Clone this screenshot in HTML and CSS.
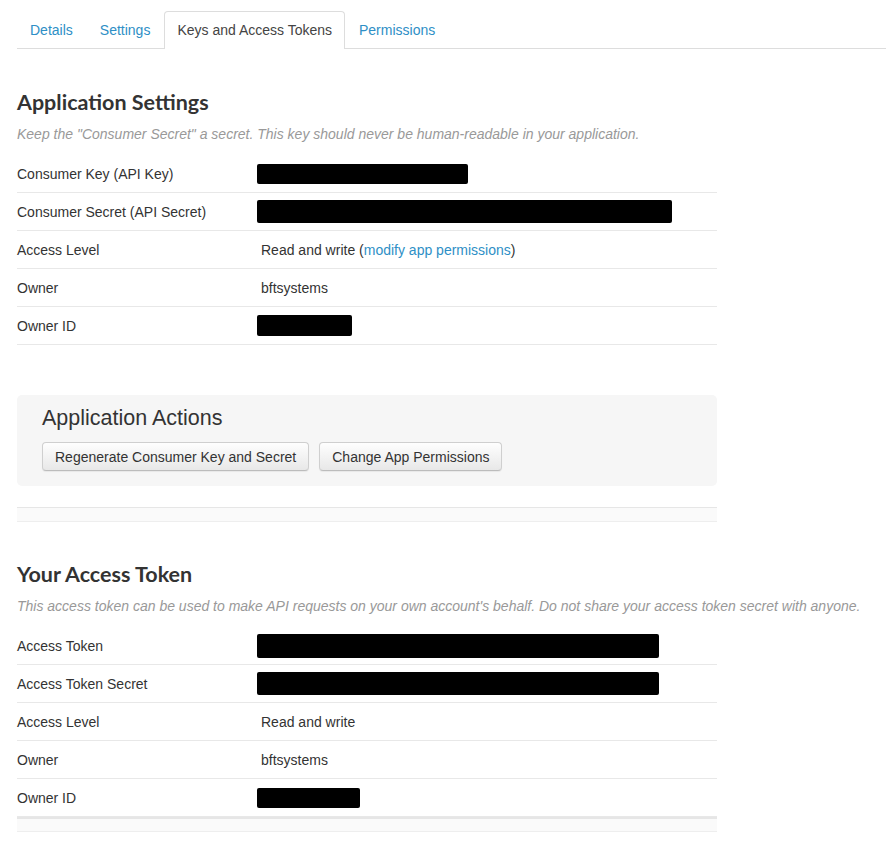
FILE: index.html
```html
<!DOCTYPE html>
<html lang="en">
<head>
<meta charset="utf-8">
<title>Keys and Access Tokens</title>
<link rel="stylesheet" href="styles.css">
</head>
<body>
<div class="page">
  <nav class="tabs">
    <a class="tab" href="#">Details</a>
    <a class="tab" href="#">Settings</a>
    <a class="tab active" href="#">Keys and Access Tokens</a>
    <a class="tab" href="#">Permissions</a>
  </nav>

  <section class="section first">
    <h2 class="title">Application Settings</h2>
    <p class="hint">Keep the "Consumer Secret" a secret. This key should never be human-readable in your application.</p>
    <table class="details">
      <tr><th>Consumer Key (API Key)</th><td><span class="redact" style="width:211px;height:20px"></span></td></tr>
      <tr><th>Consumer Secret (API Secret)</th><td><span class="redact" style="width:415px;height:23px"></span></td></tr>
      <tr><th>Access Level</th><td><span class="val">Read and write (<a class="link" href="#">modify app permissions</a>)</span></td></tr>
      <tr><th>Owner</th><td><span class="val">bftsystems</span></td></tr>
      <tr><th>Owner ID</th><td><span class="redact" style="width:95px;height:21px"></span></td></tr>
    </table>
  </section>

  <div class="actions">
    <h3 class="actions-title">Application Actions</h3>
    <div class="buttons">
      <button class="btn">Regenerate Consumer Key and Secret</button>
      <button class="btn">Change App Permissions</button>
    </div>
  </div>

  <div class="strip"></div>

  <section class="section second">
    <h2 class="title">Your Access Token</h2>
    <p class="hint">This access token can be used to make API requests on your own account's behalf. Do not share your access token secret with anyone.</p>
    <table class="details">
      <tr><th>Access Token</th><td><span class="redact" style="width:402px;height:24px"></span></td></tr>
      <tr><th>Access Token Secret</th><td><span class="redact" style="width:402px;height:23px"></span></td></tr>
      <tr><th>Access Level</th><td><span class="val">Read and write</span></td></tr>
      <tr><th>Owner</th><td><span class="val">bftsystems</span></td></tr>
      <tr><th>Owner ID</th><td><span class="redact" style="width:103px;height:20px"></span></td></tr>
    </table>
  </section>
  <div class="strip bottom"></div>
</div>
</body>
</html>
```

FILE: styles.css
```css
html, body {
  margin: 0;
  padding: 0;
  background: #fff;
}
body {
  font-family: "Liberation Sans", Arial, sans-serif;
  font-size: 14px;
  color: #333;
}
.page {
  padding: 11px 0 0 17px;
}
.tabs {
  display: flex;
  border-bottom: 1px solid #ddd;
  height: 37px;
}
.tab {
  display: block;
  padding: 0 12px;
  margin-right: 1px;
  line-height: 37px;
  color: #2e8fc6;
  text-decoration: none;
  font-size: 14px;
  border: 1px solid transparent;
  border-bottom: none;
  border-radius: 4px 4px 0 0;
}
.tab.active {
  color: #444;
  background: #fff;
  border-color: #ddd;
  height: 37px;
  margin-bottom: -1px;
  line-height: 36px;
}
.section.first {
  margin-top: 40px;
}
.section.second {
  margin-top: 39px;
}
.title {
  margin: 0;
  font-family: Lato, "Open Sans", sans-serif;
  font-weight: 700;
  font-size: 21.5px;
  line-height: 26px;
  color: #333;
}
.hint {
  margin: 10px 0 12px;
  font-style: italic;
  font-size: 14px;
  line-height: 18px;
  color: #999;
  white-space: nowrap;
}
.details {
  width: 700px;
  border-collapse: collapse;
}
.details th,
.details td {
  height: 37px;
  padding: 0;
  border-bottom: 1px solid #e8e8e8;
  vertical-align: middle;
  text-align: left;
  font-weight: normal;
}
.details th {
  width: 240px;
  color: #333;
}
.val {
  padding-left: 4px;
}
.redact {
  display: block;
  background: #000;
  border-radius: 2px;
}
.link {
  color: #2e8fc6;
  text-decoration: none;
}
.actions {
  width: 700px;
  box-sizing: border-box;
  margin-top: 50px;
  padding: 11px 25px 15px;
  background: #f6f6f6;
  border-radius: 5px;
}
.actions-title {
  margin: 0;
  font-family: "Liberation Sans", Arial, sans-serif;
  font-weight: normal;
  font-size: 21.5px;
  line-height: 24px;
  color: #333;
}
.buttons {
  display: flex;
  gap: 10px;
  margin-top: 12px;
}
.btn {
  height: 29px;
  padding: 0 12px;
  font-family: "Liberation Sans", Arial, sans-serif;
  font-size: 14px;
  color: #333;
  background: linear-gradient(#fefefe, #e8e8e8);
  border: 1px solid #cfcfcf;
  border-bottom-color: #bcbcbc;
  border-radius: 4px;
  box-shadow: 0 1px 1px rgba(0, 0, 0, 0.06);
}
.strip {
  width: 700px;
  height: 13px;
  margin-top: 21px;
  background: #fafafa;
  border-top: 1px solid #e6e6e6;
  border-bottom: 1px solid #eeeeee;
}
.strip.bottom {
  margin-top: 0;
  border-top: 2px solid #e6e6e6;
  height: 12px;
}
```
